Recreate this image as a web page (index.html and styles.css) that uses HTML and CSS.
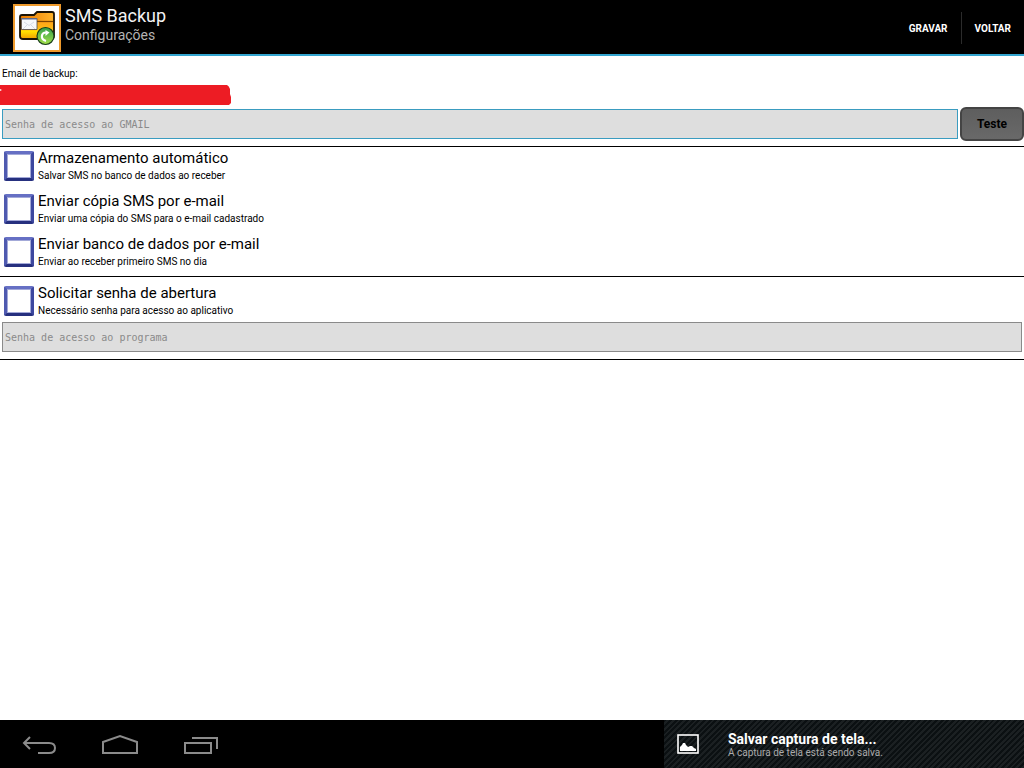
FILE: index.html
```html
<!DOCTYPE html>
<html lang="pt-BR">
<head>
<meta charset="utf-8">
<meta name="viewport" content="width=device-width, initial-scale=1">
<title>SMS Backup</title>
<link rel="stylesheet" href="styles.css">
</head>
<body>
<header class="app-bar">
  <svg class="app-logo" viewBox="0 0 48 48" aria-hidden="true">
    <defs>
      <linearGradient id="folder" x1="0" y1="0" x2="0" y2="1"><stop offset="0" stop-color="#ffa51a"/><stop offset="0.4" stop-color="#ffb914"/><stop offset="0.6" stop-color="#ffe000"/><stop offset="1" stop-color="#f2a600"/></linearGradient>
      <linearGradient id="back" x1="0" y1="0" x2="1" y2="0"><stop offset="0" stop-color="#e87800"/><stop offset="1" stop-color="#ffb52c"/></linearGradient>
      <linearGradient id="green" x1="0" y1="0" x2="0" y2="1"><stop offset="0" stop-color="#35a04a"/><stop offset="1" stop-color="#a4e04a"/></linearGradient>
    </defs>
    <rect x="1" y="1" width="46" height="46" fill="#fff" stroke="#ee9a2c" stroke-width="2"/>
    <path d="M7 13q0-2 2-2h12l3-3h15q2 0 2 2v22q0 3-3 3H10q-3 0-3-3z" fill="url(#back)" stroke="#1c1405" stroke-width="1.8" stroke-linejoin="round"/>
    <path d="M24 18h16v14q0 2-2 2H10q-2 0-2-2V26h14l2-2z" fill="url(#folder)"/>
    <path d="M24 17.500h16" stroke="#7d4300" stroke-width="1.2"/>
    <path d="M8.500 14.500h15.500v11h-15.500z" fill="#f7f8fb" stroke="#4d4b50" stroke-width="0.8"/>
    <path d="M8.500 14h15.500v1.500h-15.500z" fill="#5d6a8c"/>
    <path d="M11 18l5 3.500 5-3.500M10 25l4-4M22 25l-4-4" fill="none" stroke="#ced3df" stroke-width="0.8"/>
    <circle cx="32.500" cy="32" r="8.500" fill="url(#green)" stroke="#193e19" stroke-width="1.2"/>
    <path d="M33 37c-6-1.500-5-8.500 0-8.500" fill="none" stroke="#fff" stroke-width="2.2"/>
    <path d="M32.500 26l4 2.500-4 3.500z" fill="#fff"/>
  </svg>
  <div class="heading">
    <h1 class="app-name">SMS Backup</h1>
    <p class="screen-name">Configurações</p>
  </div>
  <div class="actions">
    <button class="action" type="button">GRAVAR</button>
    <button class="action" type="button">VOLTAR</button>
  </div>
</header>

<main class="settings">
  <section class="group account">
    <label class="field-label" for="gmail">Email de backup:</label>
    <svg class="redaction" viewBox="0 0 232 20" aria-hidden="true"><path d="M0 0H227Q229 1 230 4L230 9L231 12V18L229 20H0V6L2 5L0 4z" fill="#ed1c24"/></svg>
    <div class="field-row">
      <input class="field active" id="gmail" type="password" placeholder="Senha de acesso ao GMAIL">
      <button class="test" type="button">Teste</button>
    </div>
  </section>
  <section class="group storage">
    <label class="option"><input class="tick" type="checkbox"><span class="option-text"><span class="option-title">Armazenamento automático</span><span class="option-note">Salvar SMS no banco de dados ao receber</span></span></label>
    <label class="option"><input class="tick" type="checkbox"><span class="option-text"><span class="option-title">Enviar cópia SMS por e-mail</span><span class="option-note">Enviar uma cópia do SMS para o e-mail cadastrado</span></span></label>
    <label class="option"><input class="tick" type="checkbox"><span class="option-text"><span class="option-title">Enviar banco de dados por e-mail</span><span class="option-note">Enviar ao receber primeiro SMS no dia</span></span></label>
  </section>
  <section class="group access">
    <label class="option"><input class="tick" type="checkbox"><span class="option-text"><span class="option-title">Solicitar senha de abertura</span><span class="option-note">Necessário senha para acesso ao aplicativo</span></span></label>
    <div class="field-row">
      <input class="field" type="password" placeholder="Senha de acesso ao programa" aria-label="Senha de acesso ao programa">
    </div>
  </section>
</main>

<footer class="system-bar">
  <nav class="nav-keys">
    <button class="nav-key" type="button" aria-label="Voltar"><svg viewBox="0 0 40 24"><path d="M11 5L5 11l6 6M5 11h25q6 0 6 5t-6 5H19"/></svg></button>
    <button class="nav-key" type="button" aria-label="Início"><svg viewBox="0 0 40 24"><path d="M3 21V10L20 4l17 6v11z"/></svg></button>
    <button class="nav-key" type="button" aria-label="Recentes"><svg viewBox="0 0 40 24"><path d="M4 11h26v10H4zM11 6h25v11"/></svg></button>
  </nav>
  <div class="notice" role="status">
    <svg class="picture" viewBox="0 0 22 20" aria-hidden="true"><rect x="1" y="1" width="20" height="18" fill="none" stroke="#fff" stroke-width="1.6"/><path d="M3 17v-4l2-2 1-2h2l1 2 2 2 2-1h2l2 2 2 1v2z" fill="#fff"/></svg>
    <div class="notice-text">
      <p class="notice-title">Salvar captura de tela...</p>
      <p class="notice-note">A captura de tela está sendo salva.</p>
    </div>
  </div>
</footer>
</body>
</html>
```
FILE: styles.css
```css
* { box-sizing: border-box; }
body {
  margin: 0;
  min-height: 100vh;
  display: flex;
  flex-direction: column;
  background: #fff;
  color: #000;
  font-family: Roboto, "Liberation Sans", sans-serif;
}
button { font-family: inherit; border: 0; padding: 0; background: none; }
h1, p { margin: 0; font-weight: 400; }

.app-bar {
  display: flex;
  align-items: center;
  height: 56px;
  padding: 2px 0 0 13px;
  gap: 4px;
  background: #000;
  border-bottom: 2px solid #33a5cf;
}
.app-logo { width: 48px; height: 48px; }
.heading { flex: 1; padding-bottom: 6px; }
.app-name { font-size: 18px; line-height: 20px; color: #f3f3f3; }
.screen-name { font-size: 14px; line-height: 18px; color: #b4b4b4; }
.actions { display: flex; }
.action {
  height: 32px;
  padding: 0 13px;
  color: #fff;
  font-size: 10px;
  font-weight: 700;
}
.action + .action { border-left: 1px solid #2b2b2b; }

.settings { flex: 1; }
.group { border-bottom: 1px solid #000; }
.account { padding: 10px 0 5px; }
.field-label { display: block; padding-left: 2px; font-size: 10px; line-height: 16px; }
.redaction { display: block; width: 232px; height: 20px; margin: 3px 0 2px; }
.field-row { display: flex; align-items: center; gap: 2px; padding-left: 2px; }
.field {
  flex: 1;
  min-width: 0;
  height: 30px;
  padding: 0 2px;
  border: 1px solid #8a8a8a;
  border-radius: 0;
  background: #dedede;
  font-family: "DejaVu Sans Mono", monospace;
  font-size: 10px;
}
.field::placeholder { color: #8a8a8a; opacity: 1; }
.active { border-color: #3a9cc0; }
.test {
  width: 64px;
  height: 34px;
  border: 2px solid #444;
  border-radius: 6px;
  background: linear-gradient(#5e5e5e, #696969);
  font-size: 12px;
  font-weight: 700;
}

.option { display: flex; align-items: center; gap: 4px; height: 30px; padding-left: 4px; }
.option + .option { margin-top: 13px; }
.tick {
  appearance: none;
  width: 30px;
  height: 30px;
  margin: 0;
  border: 3px solid;
  border-color: #6670c4 #3c479f #26307f #4f5ab0;
  border-radius: 2px;
  background: #fff;
  box-shadow: inset 0 0 0 1px #a3a9d8;
}
.tick:checked { background: #5962b8; }
.option-text { display: flex; flex-direction: column; }
.option-title { font-size: 15px; line-height: 20px; }
.option-note { font-size: 10px; line-height: 16px; }
.storage { padding: 4px 0 9px; }
.access { padding: 9px 0 7px; }
.access .field-row { padding: 6px 2px 0; }

.system-bar { display: flex; height: 48px; background: #000; }
.nav-keys { flex: 1; display: flex; align-items: center; gap: 41px; padding-left: 19px; }
.nav-key { width: 40px; height: 24px; }
.nav-key svg { display: block; width: 40px; height: 24px; fill: none; stroke: #8b8b8b; stroke-width: 2; }
.notice {
  display: flex;
  align-items: center;
  gap: 29px;
  width: 360px;
  padding: 0 13px;
  background: repeating-linear-gradient(135deg, #0b1012 0 2px, #1b2022 2px 4px);
}
.picture { width: 22px; height: 20px; }
.notice-title { color: #fff; font-size: 14px; line-height: 16px; font-weight: 700; }
.notice-note { color: #aaa; font-size: 10px; line-height: 11px; }
```
